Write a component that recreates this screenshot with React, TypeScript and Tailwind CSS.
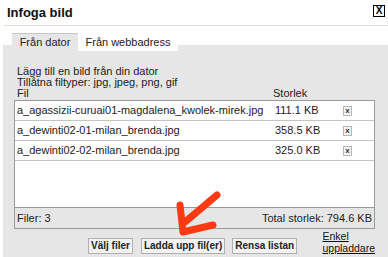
import React from 'react';

const FILES = [
  { name: 'a_agassizii-curuai01-magdalena_kwolek-mirek.jpg', size: '111.1 KB' },
  { name: 'a_dewinti02-01-milan_brenda.jpg', size: '358.5 KB' },
  { name: 'a_dewinti02-02-milan_brenda.jpg', size: '325.0 KB' },
];

const buttonClass =
  'h-[16px] whitespace-nowrap border border-[#b0b0b0] bg-[#f2f2f2] px-[2px] text-[10px] font-bold leading-none text-[#222]';

function RemoveBox() {
  return (
    <span className="flex h-[10px] w-[9px] items-center justify-center border border-[#b5b5b5] bg-[#f3f3f3] text-[8px] font-bold leading-none text-[#333]">
      x
    </span>
  );
}

function PointerArrow() {
  return (
    <svg
      className="pointer-events-none absolute left-[170px] top-[188px]"
      width="56"
      height="52"
      viewBox="0 0 56 52"
      fill="none"
    >
      <path
        d="M47 7 L15 34 M10 17 L13 44 L43 37"
        stroke="#ff3a12"
        strokeWidth="7"
        strokeLinecap="round"
        strokeLinejoin="round"
      />
    </svg>
  );
}

export default function App() {
  return (
    <div className="relative h-[257px] w-[388px] overflow-hidden bg-white font-['Liberation_Sans',Arial,sans-serif] text-[#222]">
      <div className="ml-[4px] flex h-[26px] items-center justify-between border-b border-[#dcdcdc] pl-[3px] pr-[3px]">
        <h2 className="text-[13px] font-bold text-[#111]">Infoga bild</h2>
        <span className="mb-[3px] flex h-[12px] w-[12px] items-center justify-center border border-black text-[10px] font-bold leading-none text-black">
          X
        </span>
      </div>

      <div className="ml-[3px] mt-[7px]">
        <div className="relative z-10 flex h-[18px] pl-[9px] text-[11px]">
          <div className="flex w-[66px] items-center justify-center border-t border-[#c8c8c8] bg-[#e6e6e6]">
            Från dator
          </div>
          <div className="flex w-[100px] items-center justify-center bg-white">Från webbadress</div>
        </div>

        <div className="-mt-[6px] h-[220px] bg-[#e6e6e6] pl-[11px] pr-[13px] pt-[21px] text-[11px] leading-[11px]">
          <p className="pl-[3px]">Lägg till en bild från din dator</p>
          <p className="pl-[3px]">Tillåtna filtyper: jpg, jpeg, png, gif</p>
          <div className="flex pl-[3px]">
            <span className="w-[256px]">Fil</span>
            <span>Storlek</span>
          </div>

          <div className="mt-[1px] border border-[#9a9a9a]">
            <div className="h-[106px] bg-white">
              {FILES.map(file => (
                <div
                  key={file.name}
                  className="flex h-[20px] items-center border-b border-[#c4c4c4] pl-[2px]"
                >
                  <span className="w-[258px] whitespace-nowrap">{file.name}</span>
                  <span className="w-[68px]">{file.size}</span>
                  <RemoveBox />
                </div>
              ))}
            </div>
            <div className="flex h-[21px] items-center justify-between border-t border-[#9a9a9a] px-[2px]">
              <span>Filer: 3</span>
              <span>Total storlek: 794.6 KB</span>
            </div>
          </div>

          <div className="flex items-start pl-[74px]">
            <button className={`mt-[9px] ${buttonClass}`}>Välj filer</button>
            <button className={`ml-[8px] mt-[9px] ${buttonClass}`}>Ladda upp fil(er)</button>
            <button className={`ml-[7px] mt-[9px] ${buttonClass}`}>Rensa listan</button>
            <a className="ml-auto mt-[1px] whitespace-nowrap text-[10.5px] leading-[12px] text-[#111] underline">
              Enkel
              <br />
              uppladdare
            </a>
          </div>
        </div>
      </div>

      <PointerArrow />
    </div>
  );
}
